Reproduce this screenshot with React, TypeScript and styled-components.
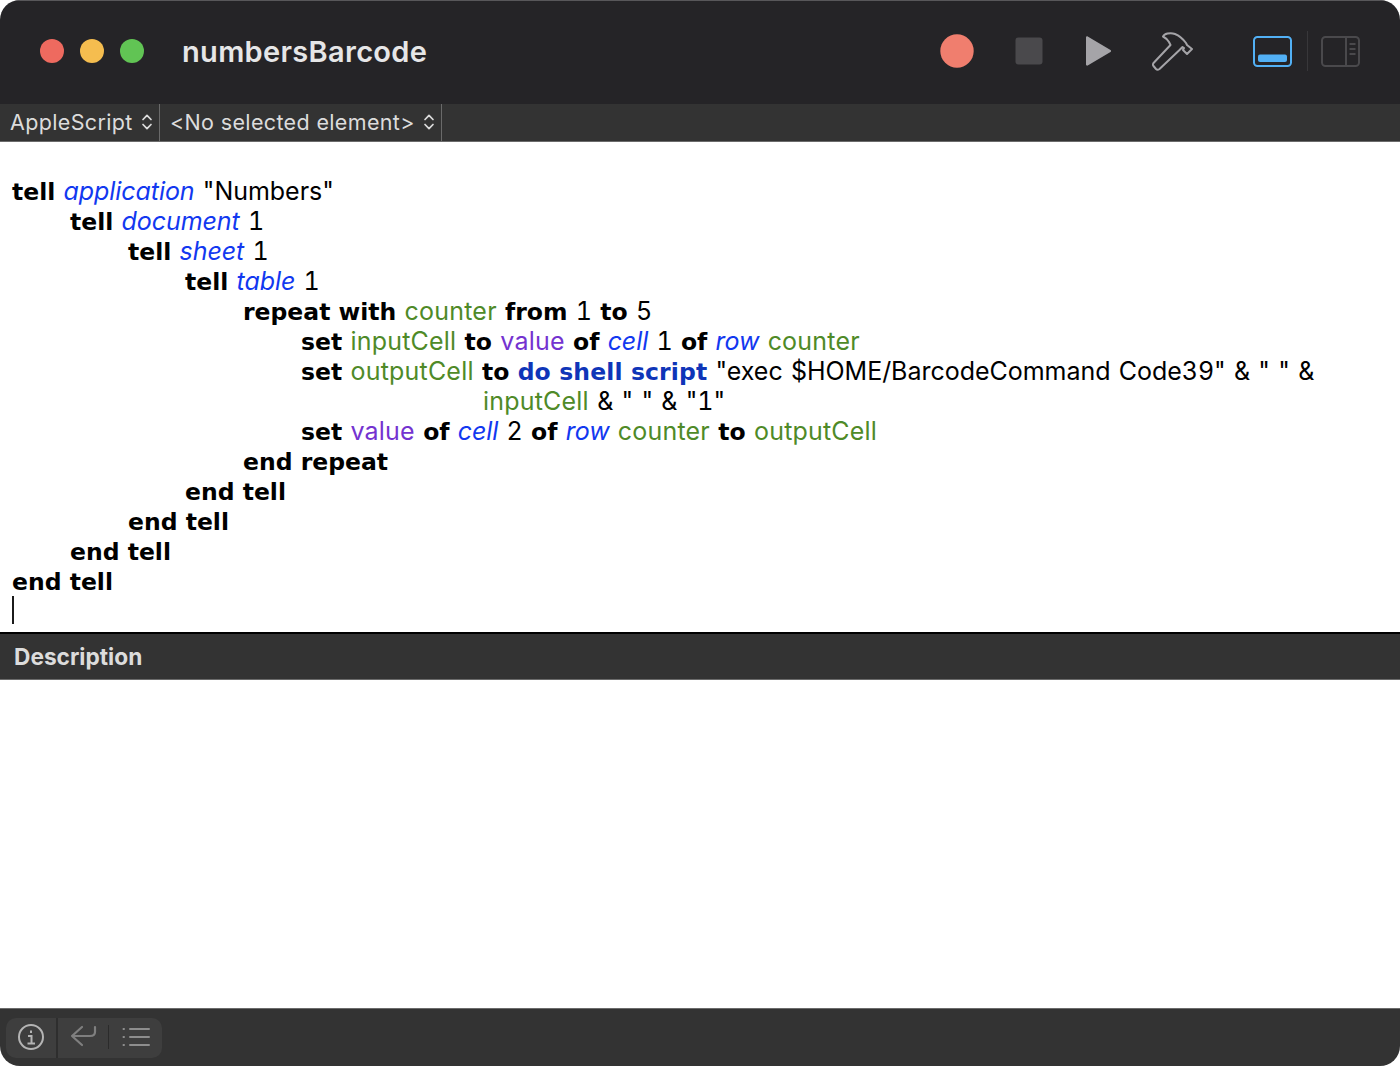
import React from 'react'
import styled, { createGlobalStyle } from 'styled-components'

const Global = createGlobalStyle`
  html, body {
    margin: 0;
    padding: 0;
    background: #fff;
  }
  body {
    font-family: Inter, "Liberation Sans", sans-serif;
  }
`

const Window = styled.div`
  width: 1400px;
  height: 1066px;
  display: flex;
  flex-direction: column;
  border-radius: 20px;
  overflow: hidden;
  background: #fff;
`
const TitleBar = styled.div`
  height: 103px;
  flex: none;
  box-sizing: content-box;
  display: flex;
  align-items: center;
  background: #252427;
  border-top: 1px solid #58575a;
`
const TitleRow = styled.div`
  flex: 1;
  display: flex;
  align-items: center;
  padding-bottom: 3px;
`
const Lights = styled.div`
  display: flex;
  gap: 16px;
  margin-left: 40px;
`
const Light = styled.span<{ $color: string }>`
  width: 24px;
  height: 24px;
  border-radius: 50%;
  background: ${p => p.$color};
`
const Title = styled.div`
  margin-left: 38px;
  color: #e6e6e7;
  font-size: 29px;
  font-weight: 600;
  letter-spacing: 0.32px;
`
const Tools = styled.div`
  margin-left: auto;
  display: flex;
  align-items: center;
  height: 60px;
  padding-right: 40px;
`
const ToolIcon = styled.svg<{ $left: number }>`
  display: block;
  flex: none;
  margin-left: ${p => p.$left}px;
`
const ToolDivider = styled.span`
  width: 1px;
  height: 40px;
  margin-left: 15px;
  background: #38373a;
`
const SelectorBar = styled.div`
  height: 37px;
  flex: none;
  display: flex;
  background: #333333;
  border-bottom: 1px solid #6b6b6b;
  box-sizing: content-box;
`
const Selector = styled.div<{ $width: number }>`
  width: ${p => p.$width}px;
  box-sizing: border-box;
  display: flex;
  align-items: center;
  justify-content: space-between;
  padding: 0 6px 2px 10px;
  border-right: 1px solid #6a6a6a;
  color: #dcdcdc;
  font-size: 21.5px;
  letter-spacing: 0.35px;
  white-space: nowrap;
`
const Editor = styled.div`
  height: 490px;
  flex: none;
  box-sizing: border-box;
  padding-top: 34px;
  background: #fff;
  font-size: 25px;
  line-height: 30px;
  color: #000;
  letter-spacing: -0.03px;
  word-spacing: 1.6px;
  font-variant-numeric: tabular-nums;
`
const Line = styled.div<{ $indent: number }>`
  height: 30px;
  padding-left: ${p => p.$indent}px;
  white-space: pre;
`
const Caret = styled.div`
  width: 2px;
  height: 28px;
  margin-left: 12px;
  background: #1b1b1b;
`
const Kw = styled.span`
  font-family: "DejaVu Sans", Verdana, sans-serif;
  font-size: 23.5px;
  font-weight: 700;
  letter-spacing: 0;
  word-spacing: 0;
`
const Cmd = styled(Kw)`
  color: #0f35b8;
  letter-spacing: 0.13px;
`
const Cls = styled.span`
  font-style: italic;
  color: #1238f0;
  letter-spacing: -0.08px;
`
const Var = styled.span`
  color: #4f8a28;
  letter-spacing: 0.2px;
`
const Prop = styled.span`
  color: #7433d0;
  letter-spacing: 0.2px;
`
const DescriptionBar = styled.div`
  height: 48px;
  flex: none;
  box-sizing: border-box;
  display: flex;
  align-items: center;
  padding: 0 0 1px 14px;
  background: #333333;
  border-top: 2px solid #000;
  border-bottom: 1px solid #6b6b6b;
  color: #dcdcdc;
  font-size: 22.7px;
  font-weight: 700;
  letter-spacing: 0;
`
const Description = styled.div`
  flex: 1;
  background: #fff;
`
const BottomBar = styled.div`
  height: 58px;
  flex: none;
  box-sizing: border-box;
  display: flex;
  align-items: flex-start;
  padding: 9px 0 0 6px;
  background: #333333;
  border-top: 1px solid #6b6b6b;
`
const SegmentGroup = styled.div`
  display: flex;
  align-items: center;
  height: 40px;
  border-radius: 10px;
  background: #3e3e3e;
  overflow: hidden;
`
const Segment = styled.div<{ $width: number; $divided?: boolean }>`
  width: ${p => p.$width}px;
  height: 40px;
  display: flex;
  align-items: center;
  justify-content: center;
  box-sizing: border-box;
  padding-bottom: 2px;
  border-right: ${p => (p.$divided ? '2px solid #2e2e2e' : '0')};
`
const SegmentRule = styled.span`
  width: 1px;
  height: 24px;
  margin-bottom: 2px;
  background: #2b2b2b;
`

const Chevrons = () => (
  <svg width="12" height="20" viewBox="0 0 12 20" fill="none" stroke="#dcdcdc" strokeWidth="1.7" strokeLinecap="round" strokeLinejoin="round">
    <path d="M2 7.5 6 3.3l4 4.2M2 12.5l4 4.2 4-4.2" />
  </svg>
)

const App = () => {
  return (
    <Window>
      <Global />
      <TitleBar>
        <TitleRow>
          <Lights>
            <Light $color="#ee6a5f" />
            <Light $color="#f5bd4f" />
            <Light $color="#61c454" />
          </Lights>
          <Title>numbersBarcode</Title>
          <Tools>
            <ToolIcon $left={0} width="34" height="34" viewBox="0 0 34 34">
              <circle cx="17" cy="17" r="16.7" fill="#f07e6e" />
            </ToolIcon>
            <ToolIcon $left={41} width="28" height="28" viewBox="0 0 28 28">
              <rect x="0.5" y="0.5" width="27" height="27" rx="3" fill="#4a494c" />
            </ToolIcon>
            <ToolIcon $left={41} width="28" height="30" viewBox="0 0 28 30">
              <path d="M2 1.5c0-.9 1-1.4 1.7-1L26.500 14c.8.5.8 1.600 0 2L3.700 29.500c-.7.4-1.700-.1-1.700-1z" fill="#a5a4a8" />
            </ToolIcon>
            <ToolIcon $left={39} width="42" height="40" viewBox="0 0 42 40" fill="none" stroke="#a5a4a8" strokeWidth="2" strokeLinejoin="round" strokeLinecap="round">
              <path d="M3 31.500 19.500 14 18 11C16 8 14 6.500 12 5.500 13 3 19 1 24 3 28 4.500 32 8 35 12L36 14 41 18 36 23 32 19 33 17 31.500 16 28 19.500 8.500 38C7 39 6 39 5 38L2.500 35C1.500 34 2 32.500 3 31.500Z" />
            </ToolIcon>
            <ToolIcon $left={60} width="39" height="31" viewBox="0 0 39 31">
              <rect x="1" y="1" width="37" height="29" rx="3.500" fill="none" stroke="#52b0f5" strokeWidth="2" />
              <rect x="5" y="18.500" width="29" height="7.500" rx="2" fill="#52b0f5" />
            </ToolIcon>
            <ToolDivider />
            <ToolIcon $left={13} width="39" height="31" viewBox="0 0 39 31" fill="none" stroke="#4a494c" strokeWidth="2">
              <rect x="1" y="1" width="37" height="29" rx="3.500" />
              <path d="M25 1v29M28.500 8h6M28.500 13h6M28.500 18h6" />
            </ToolIcon>
          </Tools>
        </TitleRow>
      </TitleBar>
      <SelectorBar>
        <Selector $width={160}>AppleScript <Chevrons /></Selector>
        <Selector $width={282}>&lt;No selected element&gt; <Chevrons /></Selector>
      </SelectorBar>
      <Editor>
        <Line $indent={12}><Kw>tell</Kw> <Cls>application</Cls> "Numbers"</Line>
        <Line $indent={70}><Kw>tell</Kw> <Cls>document</Cls> 1</Line>
        <Line $indent={128}><Kw>tell</Kw> <Cls>sheet</Cls> 1</Line>
        <Line $indent={185}><Kw>tell</Kw> <Cls>table</Cls> 1</Line>
        <Line $indent={243}><Kw>repeat with</Kw> <Var>counter</Var> <Kw>from</Kw> 1 <Kw>to</Kw> 5</Line>
        <Line $indent={301}><Kw>set</Kw> <Var>inputCell</Var> <Kw>to</Kw> <Prop>value</Prop> <Kw>of</Kw> <Cls>cell</Cls> 1 <Kw>of</Kw> <Cls>row</Cls> <Var>counter</Var></Line>
        <Line $indent={301}><Kw>set</Kw> <Var>outputCell</Var> <Kw>to</Kw> <Cmd>do shell script</Cmd> "exec $HOME/BarcodeCommand Code39" &amp; " " &amp;</Line>
        <Line $indent={483}><Var>inputCell</Var> &amp; " " &amp; "1"</Line>
        <Line $indent={301}><Kw>set</Kw> <Prop>value</Prop> <Kw>of</Kw> <Cls>cell</Cls> 2 <Kw>of</Kw> <Cls>row</Cls> <Var>counter</Var> <Kw>to</Kw> <Var>outputCell</Var></Line>
        <Line $indent={243}><Kw>end repeat</Kw></Line>
        <Line $indent={185}><Kw>end tell</Kw></Line>
        <Line $indent={128}><Kw>end tell</Kw></Line>
        <Line $indent={70}><Kw>end tell</Kw></Line>
        <Line $indent={12}><Kw>end tell</Kw></Line>
        <Caret />
      </Editor>
      <DescriptionBar>Description</DescriptionBar>
      <Description />
      <BottomBar>
        <SegmentGroup>
          <Segment $width={52} $divided>
            <svg width="28" height="28" viewBox="0 0 28 28" fill="none" stroke="#b4b4b4" strokeWidth="2">
              <circle cx="14" cy="14" r="12" />
              <path d="M14 7.500v2.500M11 13h3.500v7M10.500 20.500h7.500" />
            </svg>
          </Segment>
          <Segment $width={50}>
            <svg width="28" height="24" viewBox="0 0 28 24" fill="none" stroke="#7f7f7f" strokeWidth="2.200" strokeLinecap="round" strokeLinejoin="round">
              <path d="M13 2 3 11l10 9M3 11h18c3 0 5-1.500 5-4V2" />
            </svg>
          </Segment>
          <SegmentRule />
          <Segment $width={53}>
            <svg width="28" height="22" viewBox="0 0 28 22" fill="none" stroke="#8e8e8e" strokeWidth="2" strokeLinecap="round">
              <path d="M8 3h19M8 11h19M8 19h19M1.500 3h.5M1.500 11h.5M1.500 19h.5" />
            </svg>
          </Segment>
        </SegmentGroup>
      </BottomBar>
    </Window>
  )
}

export default App
